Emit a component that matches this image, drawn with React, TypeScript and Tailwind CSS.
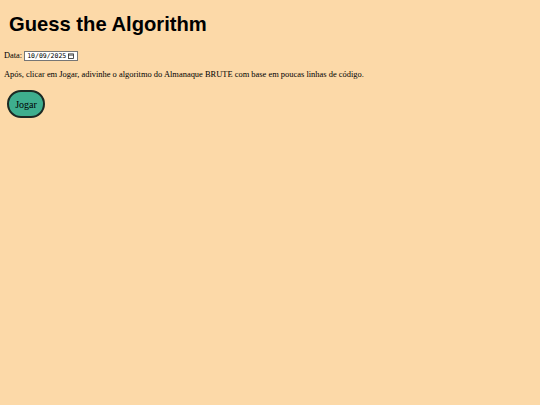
import React from 'react';

export default function App() {
  return (
    <div className="min-h-[405px] w-full bg-[#fcd9a8] text-black font-['Liberation_Serif',serif]">
      <div className="flex flex-col items-start px-[4px] pt-[11px]">
        <h1 className="ml-[5px] font-['Liberation_Sans',Arial,sans-serif] text-[20.2px] font-bold leading-[26px]">
          Guess the Algorithm
        </h1>
        <div className="mt-[13px] flex items-center gap-[2px] text-[8.4px] leading-[12px]">
          <span>Data:</span>
          <span className="flex h-[10px] w-[54px] items-center justify-between border border-[#767676] bg-white pl-[2px] pr-[3px] font-['DejaVu_Sans_Mono',monospace] text-[6.5px]">
            <span>10/09/2025</span>
            <svg width="6" height="6" viewBox="0 0 10 10" fill="none" stroke="#222" strokeWidth="1.3">
              <rect x="1" y="1.5" width="8" height="7.5" />
              <line x1="1" y1="3.5" x2="9" y2="3.5" />
            </svg>
          </span>
        </div>
        <p className="mt-[6px] text-[8.45px] leading-[12px]">
          Após, clicar em Jogar, adivinhe o algoritmo do Almanaque BRUTE com base em poucas linhas de código.
        </p>
        <button
          type="button"
          className="ml-[3px] mt-[10px] flex h-[28px] w-[38px] items-center justify-center rounded-full border-2 border-[#1c2a24] bg-[#3eae8e] text-[10px]"
        >
          Jogar
        </button>
      </div>
    </div>
  );
}
